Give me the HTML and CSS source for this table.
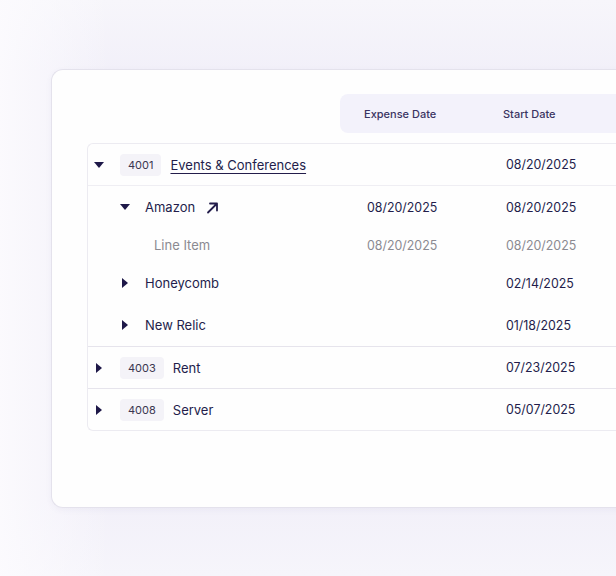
FILE: index.html
```html
<!DOCTYPE html>
<html>
<head>
<meta charset="utf-8">
<link rel="stylesheet" href="styles.css">
</head>
<body>
<div class="page">
  <div class="card">
    <div class="head-row">
      <div class="head">
        <div class="hcell">Expense Date</div>
        <div class="hcell">Start Date</div>
      </div>
    </div>
    <div class="table">
      <div class="group">
        <div class="row top">
          <div class="name lvl0">
            <span class="caret down"></span>
            <span class="badge">4001</span>
            <span class="label link">Events &amp; Conferences</span>
          </div>
          <div class="cell"></div>
          <div class="cell">08/20/2025</div>
        </div>
        <div class="row sub">
          <div class="name lvl1">
            <span class="caret down"></span>
            <span class="label">Amazon</span>
            <svg class="ext" width="13" height="13" viewBox="0 0 13 13"><path d="M2 11.5 L11 2.5 M4 2.5 H11 V9.5" fill="none" stroke="#231d4b" stroke-width="1.8" stroke-linecap="round" stroke-linejoin="round"/></svg>
          </div>
          <div class="cell">08/20/2025</div>
          <div class="cell">08/20/2025</div>
        </div>
        <div class="row item">
          <div class="name lvl2"><span class="label muted">Line Item</span></div>
          <div class="cell muted">08/20/2025</div>
          <div class="cell muted">08/20/2025</div>
        </div>
        <div class="row sub">
          <div class="name lvl1">
            <span class="caret right"></span>
            <span class="label">Honeycomb</span>
          </div>
          <div class="cell"></div>
          <div class="cell">02/14/2025</div>
        </div>
        <div class="row sub">
          <div class="name lvl1">
            <span class="caret right"></span>
            <span class="label">New Relic</span>
          </div>
          <div class="cell"></div>
          <div class="cell">01/18/2025</div>
        </div>
      </div>
      <div class="group">
        <div class="row top">
          <div class="name lvl0">
            <span class="caret right"></span>
            <span class="badge">4003</span>
            <span class="label">Rent</span>
          </div>
          <div class="cell"></div>
          <div class="cell">07/23/2025</div>
        </div>
      </div>
      <div class="group last">
        <div class="row top">
          <div class="name lvl0">
            <span class="caret right"></span>
            <span class="badge">4008</span>
            <span class="label">Server</span>
          </div>
          <div class="cell"></div>
          <div class="cell">05/07/2025</div>
        </div>
      </div>
    </div>
  </div>
</div>
</body>
</html>
```

FILE: styles.css
```css
html, body {
  margin: 0;
  padding: 0;
}
body {
  width: 616px;
  height: 576px;
  overflow: hidden;
  font-family: "Inter", "Noto Sans", sans-serif;
  color: #231d4b;
  background:
    linear-gradient(90deg, rgba(252,251,254,0.9) 0px, rgba(252,251,254,0) 110px),
    linear-gradient(180deg, #f7f6fb 0px, #f2f0f9 70px, #f2f0f9 500px, #f6f5fb 576px);
}
.page {
  padding: 69px 0 0 51px;
}
.card {
  width: 640px;
  height: 439px;
  box-sizing: border-box;
  background: #fefefe;
  border: 1px solid #e4e2ec;
  border-right: none;
  border-radius: 12px 0 0 12px;
  box-shadow: 0 2px 6px rgba(80, 70, 140, 0.05);
  padding: 24px 0 0 35px;
}
.head-row {
  display: flex;
  padding-left: 253px;
}
.head {
  flex: 1;
  height: 39px;
  background: #f3f2fb;
  border-radius: 8px 0 0 8px;
  display: flex;
  align-items: center;
  padding-left: 24px;
}
.hcell {
  font-size: 11px;
  font-weight: 500;
  color: #3a3462;
  width: 139px;
}
.table {
  margin-top: 10px;
  border: 1px solid #ecebf1;
  border-right: none;
  border-radius: 6px 0 0 6px;
}
.group {
  border-bottom: 1px solid #e6e4ec;
}
.group.last {
  border-bottom: none;
}
.row {
  display: grid;
  grid-template-columns: 255px 139px 1fr;
  align-items: center;
  font-size: 13px;
}
.row.top {
  height: 41px;
}
.group:first-child .row.top {
  border-bottom: 1px solid #efeef3;
}
.row.sub {
  height: 42px;
}
.row.item {
  height: 34px;
}
.name {
  display: flex;
  align-items: center;
}
.lvl0 { padding-left: 6px; }
.lvl1 { padding-left: 32px; }
.lvl2 { padding-left: 66px; }
.caret {
  width: 10px;
  height: 10px;
  display: flex;
  align-items: center;
  justify-content: center;
}
.caret::before {
  content: "";
  display: block;
  width: 0;
  height: 0;
}
.caret.down::before {
  border-left: 5px solid transparent;
  border-right: 5px solid transparent;
  border-top: 6.5px solid #1e1848;
}
.caret.right::before {
  border-top: 5px solid transparent;
  border-bottom: 5px solid transparent;
  border-left: 6.5px solid #1e1848;
}
.lvl0 .caret { margin-right: 16px; }
.lvl1 .caret { margin-right: 15px; }
.badge {
  height: 22px;
  display: flex;
  align-items: center;
  padding: 0 8px;
  background: #f4f3f8;
  border-radius: 4px;
  font-size: 11px;
  color: #3b3650;
  margin-right: 9px;
}
.label {
  color: #231d4b;
}
.link {
  text-decoration: underline;
  text-underline-offset: 3px;
  text-decoration-thickness: 1px;
}
.ext {
  margin-left: 11px;
}
.cell {
  padding-left: 24px;
  font-size: 12.4px;
  color: #231d4b;
}
.muted {
  color: #8b8a91;
}
```
